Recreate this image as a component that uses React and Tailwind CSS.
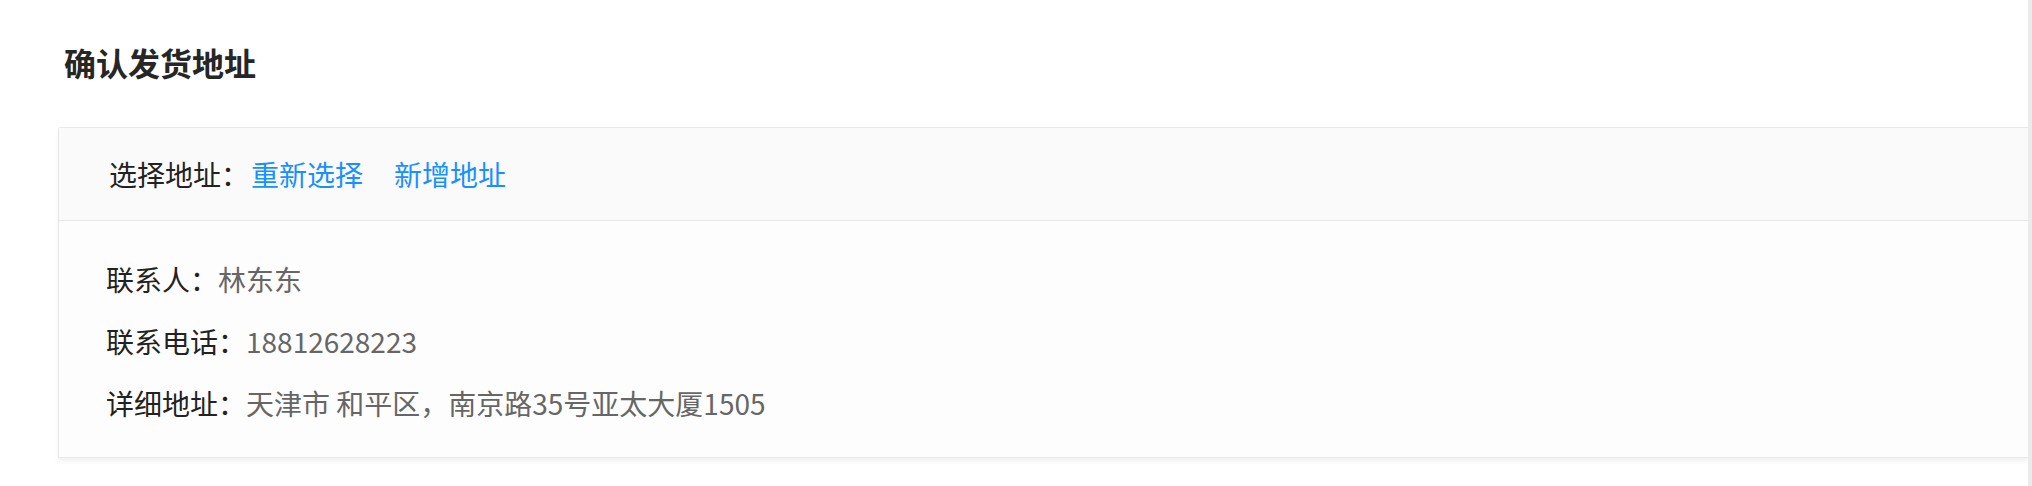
export default function App() {
  const font = { fontFamily: '"Noto Sans CJK SC", "Noto Sans", sans-serif' };
  return (
    <div className="flex h-[486px] w-full bg-white" style={font}>
      <div className="flex-1 pl-[58px] pt-[38px]">
        <h1 className="ml-[6px] text-[32px] leading-[48px] font-bold text-[#262626]">确认发货地址</h1>
        <div className="mt-[41px] rounded-tl-[3px] border border-[#e8e8e8] border-r-0 shadow-[0_4px_4px_rgba(0,0,0,0.05)]">
          <div className="flex h-[93px] items-center border-b border-[#e8e8e8] bg-[#fafafa] pl-[50px] text-[28px] text-[#222]">
            <span>选择地址：</span>
            <a className="ml-[2px] cursor-pointer text-[#1890ff]">重新选择</a>
            <a className="ml-[31px] cursor-pointer text-[#1890ff]">新增地址</a>
          </div>
          <div className="bg-[#fdfdfd] pl-[47px] pt-[27px] pb-[23px] text-[28px]">
            <div className="flex h-[62px] items-center">
              <span className="text-[#222]">联系人：</span>
              <span className="text-[#666]">林东东</span>
            </div>
            <div className="flex h-[62px] items-center">
              <span className="text-[#222]">联系电话：</span>
              <span className="text-[#666]">18812628223</span>
            </div>
            <div className="flex h-[62px] items-center">
              <span className="text-[#222]">详细地址：</span>
              <span className="text-[#666]">天津市 和平区，南京路35号亚太大厦1505</span>
            </div>
          </div>
        </div>
      </div>
      <div className="w-[4px] bg-[#ebebeb]"></div>
    </div>
  );
}
